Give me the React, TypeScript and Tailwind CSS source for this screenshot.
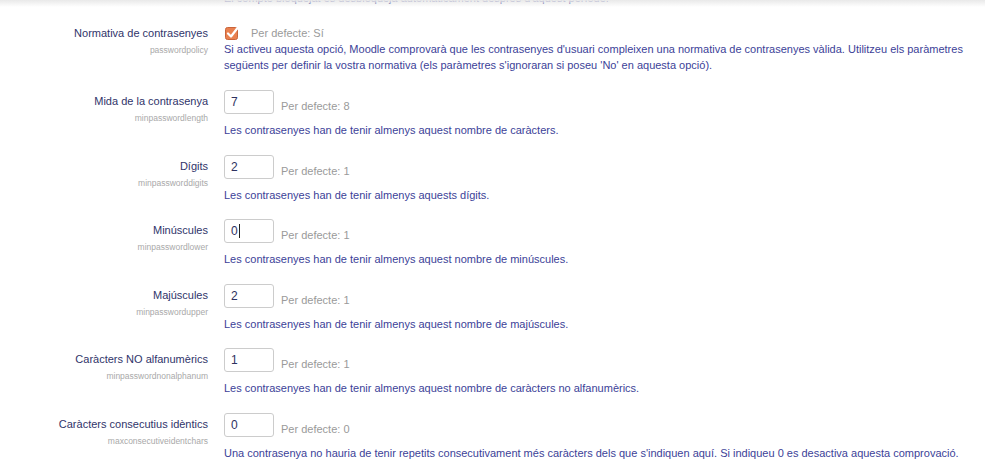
import React from 'react';

interface Setting {
  label: string;
  name: string;
  value: string;
  def: string;
  desc: string;
  caret?: boolean;
}

const settings: Setting[] = [
  {
    label: 'Mida de la contrasenya',
    name: 'minpasswordlength',
    value: '7',
    def: '8',
    desc: 'Les contrasenyes han de tenir almenys aquest nombre de caràcters.',
  },
  {
    label: 'Dígits',
    name: 'minpassworddigits',
    value: '2',
    def: '1',
    desc: 'Les contrasenyes han de tenir almenys aquests dígits.',
  },
  {
    label: 'Minúscules',
    name: 'minpasswordlower',
    value: '0',
    def: '1',
    desc: 'Les contrasenyes han de tenir almenys aquest nombre de minúscules.',
    caret: true,
  },
  {
    label: 'Majúscules',
    name: 'minpasswordupper',
    value: '2',
    def: '1',
    desc: 'Les contrasenyes han de tenir almenys aquest nombre de majúscules.',
  },
  {
    label: 'Caràcters NO alfanumèrics',
    name: 'minpasswordnonalphanum',
    value: '1',
    def: '1',
    desc: 'Les contrasenyes han de tenir almenys aquest nombre de caràcters no alfanumèrics.',
  },
  {
    label: 'Caràcters consecutius idèntics',
    name: 'maxconsecutiveidentchars',
    value: '0',
    def: '0',
    desc: "Una contrasenya no hauria de tenir repetits consecutivament més caràcters dels que s'indiquen aquí. Si indiqueu 0 es desactiva aquesta comprovació.",
  },
];

const Label: React.FC<{ label: string; name: string; top: string }> = ({ label, name, top }) => (
  <div className={`w-[208px] shrink-0 mr-4 text-right ${top}`}>
    <div className="leading-4 text-[#30346a] whitespace-nowrap">{label}</div>
    <div className="mt-[3px] text-[8.5px] leading-3 text-[#a9a9a9]">{name}</div>
  </div>
);

const Checkbox = () => (
  <svg width="14" height="14" viewBox="0 0 14 14" className="ml-px">
    <rect x="0.5" y="1.5" width="12" height="12" rx="2" fill="#e9804f" stroke="#c9643a" />
    <path d="M3 7.5 L6 10.5 L12.5 2" fill="none" stroke="#ffffff" strokeWidth="2.2" strokeLinecap="round" strokeLinejoin="round" />
  </svg>
);

export default function App() {
  return (
    <div className="relative min-h-[464px] overflow-hidden bg-white text-[11px] font-['Liberation_Sans',Arial,sans-serif]">
      <div className="pointer-events-none absolute inset-x-0 top-0 h-[7px] bg-gradient-to-b from-[#e9e9e9] to-white/0" />

      <div className="-mt-[10px] pl-[224px] leading-4 text-[#3c3f98] whitespace-nowrap">
        El compte bloquejat es desbloqueja automàticament després d'aquest període.
      </div>

      <div className="mt-[19px] flex flex-col">
        {/* password policy */}
        <div className="flex mb-[17px]">
          <Label label="Normativa de contrasenyes" name="passwordpolicy" top="" />
          <div>
            <div className="flex h-4 items-center">
              <Checkbox />
              <span className="ml-[12px] text-[#9a9a9a]">Per defecte: Sí</span>
            </div>
            <div className="leading-4 text-[#3c3f98] whitespace-nowrap">
              Si activeu aquesta opció, Moodle comprovarà que les contrasenyes d'usuari compleixen una normativa de contrasenyes vàlida. Utilitzeu els paràmetres
              <br />
              següents per definir la vostra normativa (els paràmetres s'ignoraran si poseu 'No' en aquesta opció).
            </div>
          </div>
        </div>

        {settings.map((s) => (
          <div key={s.name} className="flex mb-[16.5px]">
            <Label label={s.label} name={s.name} top="pt-[3px]" />
            <div>
              <div className="flex items-end">
                <div className="flex h-[24px] w-[50px] items-center rounded-[3px] border border-[#cccccc] px-[6px] text-[12px] text-[#2e3160]">
                  {s.value}
                  {s.caret && <span className="ml-px inline-block h-[14px] w-px bg-[#222]" />}
                </div>
                <span className="ml-[7px] leading-4 text-[#9a9a9a]">Per defecte: {s.def}</span>
              </div>
              <div className="mt-[8px] leading-4 text-[#3c3f98] whitespace-nowrap">{s.desc}</div>
            </div>
          </div>
        ))}
      </div>
    </div>
  );
}
